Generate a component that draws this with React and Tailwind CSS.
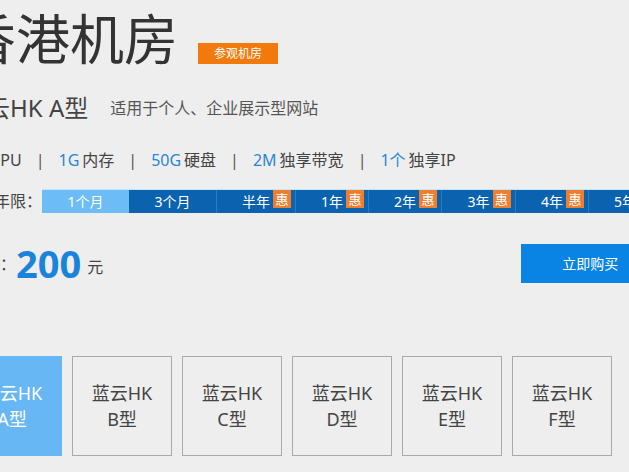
import React from "react";

const font = { fontFamily: '"Noto Sans", "Noto Sans CJK SC", sans-serif' };

const specs = [
  { num: "1核", label: "CPU" },
  { num: "1G", label: "内存" },
  { num: "50G", label: "硬盘" },
  { num: "2M", label: "独享带宽" },
  { num: "1个", label: "独享IP" },
];

const terms = [
  { label: "1个月", w: "w-[87px]", active: true },
  { label: "3个月", w: "w-[87px]" },
  { label: "半年", w: "w-[79px]", hui: true },
  { label: "1年", w: "w-[73px]", hui: true },
  { label: "2年", w: "w-[73px]", hui: true },
  { label: "3年", w: "w-[74px]", hui: true },
  { label: "4年", w: "w-[73px]", hui: true },
  { label: "5年", w: "w-[73px]", hui: true },
];

const models = ["A", "B", "C", "D", "E", "F"];

export default function App() {
  return (
    <div className="w-full min-h-[472px] overflow-hidden bg-[#eeeeee] text-[#444]" style={font}>
      <div className="-ml-[38px] w-[760px]">
        {/* title */}
        <div className="flex items-start h-[78px]">
          <h1 className="text-[54px] leading-[78px] text-[#333] font-normal">香港机房</h1>
          <span className="mt-[43px] ml-[20px] w-[80px] h-[21px] bg-[#f27a0c] text-white text-[12px] leading-[21px] text-center">
            参观机房
          </span>
        </div>

        {/* product name */}
        <div className="flex items-center h-[60px]">
          <span className="text-[24px] text-[#444]">蓝云HK A型</span>
          <span className="ml-[22px] text-[16px] text-[#555]">适用于个人、企业展示型网站</span>
        </div>

        {/* specs */}
        <div className="flex items-center h-[44px] text-[16px]">
          {specs.map((s, i) => (
            <React.Fragment key={s.label}>
              {i > 0 && <span className="mx-[14px] text-[#555]">|</span>}
              <span className="text-[#2b86d4]">{s.num}</span>
              <span className="ml-[3px] text-[#444]">{s.label}</span>
            </React.Fragment>
          ))}
        </div>

        {/* term selector */}
        <div className="flex items-center h-[38px]">
          <span className="text-[16px] text-[#444] w-[80px]">购买年限：</span>
          <div className="flex h-[24px] bg-[#0b63b0] border-t border-[#bfe6fb]">
            {terms.map((t, i) => (
              <div
                key={t.label}
                className={`${t.w} h-full flex justify-center text-[14px] text-white ${
                  t.active ? "bg-[#6cbcf7]" : "bg-[#0b63b0]"
                } ${i > 1 ? "border-l border-[#2c7cc2]" : ""}`}
              >
                <span className="relative leading-[23px]">
                  {t.label}
                  {t.hui && (
                    <span className="absolute left-full top-0 ml-[3px] w-[18px] h-[18px] bg-[#ef7e2f] text-white text-[13px] leading-[18px] text-center">
                      惠
                    </span>
                  )}
                </span>
              </div>
            ))}
          </div>
        </div>

        {/* price */}
        <div className="flex items-center mt-[24px] h-[39px]">
          <span className="ml-[6px] w-[48px] text-[16px] text-[#444]">费用：</span>
          <span className="text-[38px] font-bold text-[#1a84dc] leading-[39px]">200</span>
          <span className="ml-[6px] mt-[6px] text-[16px] text-[#444]">元</span>
          <button className="ml-[418px] w-[138px] h-[39px] bg-[#0a84e4] text-white text-[14px]">
            立即购买
          </button>
        </div>

        {/* models */}
        <div className="flex gap-[10px] mt-[73px]">
          {models.map((m) => (
            <div
              key={m}
              className={`w-[100px] h-[100px] flex flex-col items-center justify-center text-[18px] leading-[26px] border ${
                m === "A" ? "bg-[#67b7f4] border-[#67b7f4] text-white" : "border-[#aaaaaa] text-[#444]"
              }`}
            >
              <span>蓝云HK</span>
              <span>{m}型</span>
            </div>
          ))}
        </div>
      </div>
    </div>
  );
}
